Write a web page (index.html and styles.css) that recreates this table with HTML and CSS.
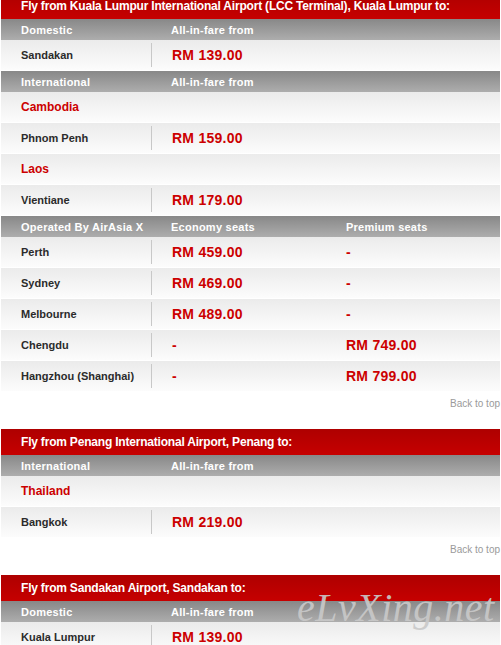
FILE: index.html
```html
<!DOCTYPE html>
<html lang="en">
<head>
    <meta charset="UTF-8">
    <title>AirAsia Fares</title>
    <link rel="stylesheet" href="styles.css">
</head>
<body>
<div class="page">
    <div class="route">
        <div class="route-title">Fly from Kuala Lumpur International Airport (LCC Terminal), Kuala Lumpur to:</div>
        <div class="row head"><div class="c1">Domestic</div><div class="c2">All-in-fare from</div></div>
        <div class="row"><div class="c1">Sandakan</div><div class="c2"><span class="fare">RM 139.00</span></div></div>
        <div class="row head"><div class="c1">International</div><div class="c2">All-in-fare from</div></div>
        <div class="row country"><div class="c1">Cambodia</div></div>
        <div class="row"><div class="c1">Phnom Penh</div><div class="c2"><span class="fare">RM 159.00</span></div></div>
        <div class="row country"><div class="c1">Laos</div></div>
        <div class="row"><div class="c1">Vientiane</div><div class="c2"><span class="fare">RM 179.00</span></div></div>
        <div class="row head"><div class="c1">Operated By AirAsia X</div><div class="c2">Economy seats</div><div class="c3">Premium seats</div></div>
        <div class="row"><div class="c1">Perth</div><div class="c2"><span class="fare">RM 459.00</span></div><div class="c3"><span class="fare">-</span></div></div>
        <div class="row"><div class="c1">Sydney</div><div class="c2"><span class="fare">RM 469.00</span></div><div class="c3"><span class="fare">-</span></div></div>
        <div class="row"><div class="c1">Melbourne</div><div class="c2"><span class="fare">RM 489.00</span></div><div class="c3"><span class="fare">-</span></div></div>
        <div class="row"><div class="c1">Chengdu</div><div class="c2"><span class="fare dash">-</span></div><div class="c3"><span class="fare">RM 749.00</span></div></div>
        <div class="row"><div class="c1">Hangzhou (Shanghai)</div><div class="c2"><span class="fare dash">-</span></div><div class="c3"><span class="fare">RM 799.00</span></div></div>
    </div>
    <div class="back-top"><a href="#">Back to top</a></div>

    <div class="route">
        <div class="route-title">Fly from Penang International Airport, Penang to:</div>
        <div class="row head"><div class="c1">International</div><div class="c2">All-in-fare from</div></div>
        <div class="row country"><div class="c1">Thailand</div></div>
        <div class="row"><div class="c1">Bangkok</div><div class="c2"><span class="fare">RM 219.00</span></div></div>
    </div>
    <div class="back-top"><a href="#">Back to top</a></div>

    <div class="route">
        <div class="route-title">Fly from Sandakan Airport, Sandakan to:</div>
        <div class="row head"><div class="c1">Domestic</div><div class="c2">All-in-fare from</div></div>
        <div class="row"><div class="c1">Kuala Lumpur</div><div class="c2"><span class="fare">RM 139.00</span></div></div>
    </div>

    <div class="watermark">eLvXing.net</div>
</div>
</body>
</html>
```

FILE: styles.css
```css
body {
    margin: -7px 0 0 0;
    font-family: "Liberation Sans", Arial, sans-serif;
    background: #fff;
}
.page {
    position: relative;
    padding: 0 1px;
}
.route-title {
    height: 26px;
    line-height: 26px;
    padding-left: 20px;
    background: linear-gradient(#ae0000, #c60000);
    color: #fff;
    font-size: 12px;
    font-weight: bold;
    letter-spacing: -0.2px;
    white-space: nowrap;
    overflow: hidden;
}
.row {
    display: grid;
    grid-template-columns: 150px 175px 1fr;
    align-items: center;
    height: 30px;
    border-bottom: 1px solid #fff;
    background: linear-gradient(#ebebeb, #fcfcfc);
    font-size: 11px;
    font-weight: bold;
    color: #2b2b2b;
}
.row .c1 {
    padding-left: 20px;
    white-space: nowrap;
}
.row .c2 {
    height: 24px;
    line-height: 24px;
    border-left: 1px solid #c8c8c8;
    padding-left: 19px;
}
.row .c3 {
    padding-left: 20px;
}
.row.head {
    height: 21px;
    border-bottom: 0;
    background: linear-gradient(#888, #adadad);
    color: #fff;
    letter-spacing: 0.25px;
}
.row.head .c2 {
    height: auto;
    line-height: normal;
    border-left: 0;
    padding-left: 20px;
}
.row.country .c1 {
    color: #cc0000;
    font-size: 12px;
}
.fare {
    color: #cc0000;
    font-size: 14px;
    letter-spacing: 0.25px;
}
.row .c2 .fare {
    padding-left: 1px;
}
.fare.dash {
    padding-left: 2px;
}
.back-top {
    margin: 6px 0 19px;
    height: 12px;
    line-height: 12px;
    text-align: right;
    font-size: 10px;
}
.back-top a {
    color: #9a9a9a;
    text-decoration: none;
}
.watermark {
    position: absolute;
    left: 297px;
    top: 591px;
    font-family: "Liberation Serif", serif;
    font-style: italic;
    font-size: 40px;
    color: #c9c9c9;
    opacity: 0.9;
    letter-spacing: 0.5px;
}
```
